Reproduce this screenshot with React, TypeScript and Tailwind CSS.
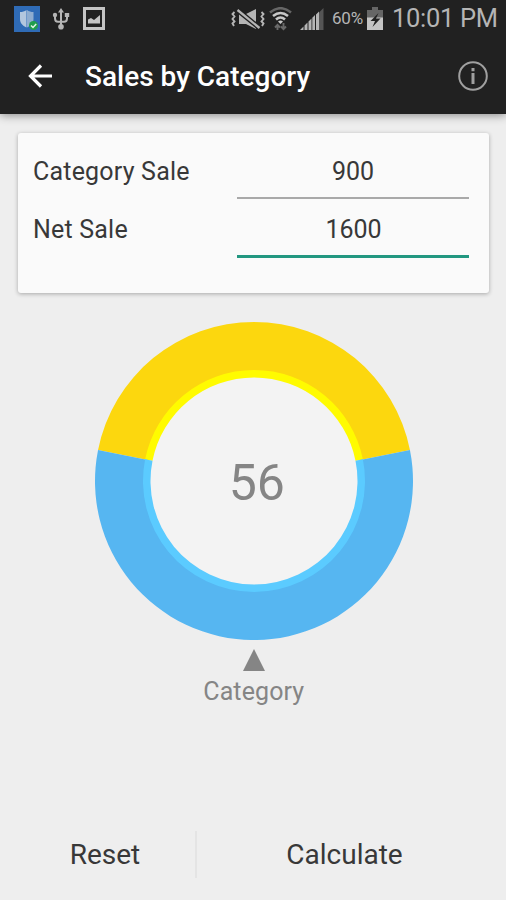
import { useState } from "react";

type Arc = {
  d: string;
  color: string;
};

const CENTER = 159;

// closed ring segment between two radii, angles in degrees clockwise from 3 o'clock
const ringSegment = (inner: number, outer: number, from: number, to: number) => {
  const point = (r: number, deg: number) => {
    const rad = (deg * Math.PI) / 180;
    return `${(CENTER + r * Math.cos(rad)).toFixed(2)} ${(CENTER + r * Math.sin(rad)).toFixed(2)}`;
  };
  const large = to - from > 180 ? 1 : 0;
  return `M${point(outer, from)} A${outer} ${outer} 0 ${large} 1 ${point(outer, to)} L${point(inner, to)} A${inner} ${inner} 0 ${large} 0 ${point(inner, from)}Z`;
};

const StatusBar = () => {
  return (
    <div className="flex h-[37px] items-center text-[#b5b5b5]">
      <svg className="ml-[14px] h-[26px] w-[26px]" viewBox="0 0 26 26">
        <rect width="26" height="26" fill="#2f6bb6" />
        <path d="M13 4c2 1.500 4 2 6.500 2v7c0 4-2.500 6.500-6.500 8.500z" fill="#8fadd0" />
        <path d="M12.500 4v17.500C8.500 19.500 6 17 6 13V6c2.500 0 4.500-.5 6.500-2z" fill="#b3c7de" />
        <circle cx="19.500" cy="19.500" r="4.500" fill="#1f9d4c" />
        <path d="M17 19.500l2 2 3.200-3.600" fill="none" stroke="#e0f3e6" strokeWidth="1.500" />
      </svg>
      <svg className="ml-[12px] h-[22px] w-[18px]" viewBox="0 0 18 22" fill="none" stroke="currentColor" strokeWidth="2">
        <path d="M9 3v16M3 7.500v2.800c0 2 1.200 3.500 3 3.500h6c1.800 0 3-1.500 3-3.500V7.500" />
        <path d="M9 0l3 4.500H6z" fill="currentColor" stroke="none" />
        <circle cx="3" cy="7" r="2.200" fill="currentColor" stroke="none" />
        <path d="M12.800 5h4.400v4h-4.400z" fill="currentColor" stroke="none" />
        <circle cx="9" cy="18.800" r="2.800" fill="currentColor" stroke="none" />
      </svg>
      <svg className="ml-[13px] h-[23px] w-[22px]" viewBox="0 0 22 23">
        <path d="M1.500 1.500h19v20h-19z" fill="none" stroke="#c4c4c4" strokeWidth="3" />
        <path d="M5 16.500v-4l3-1.500 3 2 6-5v8.500z" fill="#c4c4c4" />
      </svg>

      <svg className="ml-[126px] h-[22px] w-[34px]" viewBox="0 0 34 22" fill="none" stroke="currentColor" strokeWidth="1.900">
        <path d="M3.500 4l-2 2 2 2.500-2 2.500 2 2.500-2 2 1.500 2.500M30.500 4l2 2-2 2.500 2 2.500-2 2.500 2 2-1.500 2.500" />
        <path d="M8 6h7l10-5v20l-10-5H8z" fill="currentColor" stroke="none" />
        <path d="M6.500 2l22 18" stroke="#212121" strokeWidth="5" />
        <path d="M6.500 2l22 18" strokeWidth="2.300" />
      </svg>
      <svg className="ml-[4px] mt-[1px] h-[24px] w-[23px]" viewBox="0 0 23 24" fill="none" stroke="currentColor">
        <path d="M1 5.500Q11.500-3 22 5.500" stroke="#666" strokeWidth="2.600" />
        <path d="M4 9Q11.500 3 19 9M7 12.500Q11.500 8.500 16 12.500" stroke="#c8c8c8" strokeWidth="2.600" />
        <path d="M9 14.500q2.500-2 5 0L11.500 17z" fill="#c8c8c8" stroke="none" />
        <path d="M8.500 23v-5.500m-2.500 3l2.500-2.700 2.500 2.700M14.500 16v6m-2.500-2.500l2.500 2.700 2.500-2.700" stroke="#696969" strokeWidth="1.900" />
      </svg>
      <svg className="ml-[8px] mt-[1px] h-[23px] w-[24px]" viewBox="0 0 24 23">
        <path d="M19 4.500L23.500 0v22H19z" fill="#555" />
        <path d="M0 22l3.500-3.500V22zM4.500 17.500l3-3V22h-3zM8.500 13.500l3-3V22h-3zM12.300 9.700l2.700-2.700v15h-2.700zM16 6.500l3-3V22h-3z" fill="currentColor" />
      </svg>
      <span className="ml-[8px] w-[32px] whitespace-nowrap text-[17px] tracking-[-0.2px]">60%</span>
      <svg className="ml-[3px] h-[23px] w-[16px]" viewBox="0 0 16 23">
        <path d="M5 0h6v3h5v8H0V3h5z" fill="#666" />
        <path d="M0 10.500h16V23H0z" fill="#c4c4c4" />
        <path d="M11.500 6L3.500 14H8l-2.500 6 8-8.500H9z" fill="#212121" />
      </svg>
      <span className="ml-[9px] whitespace-nowrap text-[25.500px] tracking-[-0.3px]">10:01 PM</span>
    </div>
  );
};

const CategoryChart = ({ percent }: { percent: number }) => {
  const half = (percent / 100) * 180;
  const from = 90 - half;
  const to = 90 + half;
  const arcs: Arc[] = [
    { d: ringSegment(107, 159, to, from + 360), color: "#fcd70e" },
    { d: ringSegment(103.5, 111, to, from + 360), color: "#fffb00" },
    { d: ringSegment(107, 159, from, to), color: "#56b6f1" },
    { d: ringSegment(103.5, 111, from, to), color: "#5bcbff" },
  ];

  return (
    <div className="mt-[28.5px] flex flex-col items-center pl-[1.5px] text-[#858585]">
      <div className="grid h-[318px] w-[318px] place-items-center">
        <svg className="col-start-1 row-start-1 h-[318px] w-[318px]" viewBox="0 0 318 318">
          <circle cx={CENTER} cy={CENTER} r="104" fill="#f3f3f3" />
          {arcs.map(arc => (
            <path key={arc.color} d={arc.d} fill={arc.color} />
          ))}
        </svg>
        <span className="z-10 col-start-1 row-start-1 ml-[6px] mt-[4px] text-[50px] leading-none">
          {Math.floor(percent)}
        </span>
      </div>
      <svg className="mt-[9px] h-[22px] w-[22px]" viewBox="0 0 22 22">
        <path d="M11 0l11 22H0z" fill="#858585" />
      </svg>
      <p className="mt-[5.500px] text-[25px] leading-[32px] tracking-[0.1px]">Category</p>
    </div>
  );
};

const App = () => {
  const [categorySale, setCategorySale] = useState("900");
  const [netSale, setNetSale] = useState("1600");
  const [percent, setPercent] = useState(56.25);

  const handleCalculate = () => {
    const result = (Number(categorySale) / Number(netSale)) * 100;
    if (result > 0 && result < 100) {
      setPercent(result);
    }
  };

  const handleReset = () => {
    setCategorySale("");
    setNetSale("");
  };

  return (
    <div className="flex h-[900px] w-[506px] flex-col overflow-hidden bg-[#eeeeee] font-['Roboto',sans-serif] text-[#383838]">
      <header className="h-[114px] shrink-0 bg-[#212121] shadow-[0_1px_9px_rgba(0,0,0,0.45)]">
        <StatusBar />
        <div className="flex h-[77px] items-center">
          <svg className="ml-[28px] h-[24px] w-[24px]" viewBox="0 0 24 24" fill="none" stroke="#fff" strokeWidth="3.200">
            <path d="M24 12H3M13 1.500L2.500 12 13 22.500" />
          </svg>
          <h1 className="ml-[33px] mt-[3px] text-[28px] font-medium text-white">Sales by Category</h1>
          <svg className="ml-auto mr-[18px] h-[30px] w-[30px]" viewBox="0 0 30 30" fill="none" stroke="#a0a0a0">
            <circle cx="15" cy="15" r="13.800" strokeWidth="2" />
            <path d="M15 12v11M15 7v3.200" strokeWidth="3" />
          </svg>
        </div>
      </header>

      <div className="ml-[18px] mr-[17px] mt-[19px] h-[160px] shrink-0 rounded-[3px] bg-[#fafafa] px-[15px] shadow-[0_1px_4px_rgba(0,0,0,0.3)]">
        <div className="flex h-[66px]">
          <label htmlFor="category-sale" className="w-[204px] pt-[23px] text-[25px] leading-[32px] tracking-[0.2px]">Category Sale</label>
          <input
            id="category-sale"
            className="h-[66px] w-[232px] border-b-2 border-[#a9a9a9] pt-[13px] text-center text-[25px] outline-none"
            value={categorySale}
            onChange={e => setCategorySale(e.target.value)}
          />
        </div>
        <div className="flex h-[59px]">
          <label htmlFor="net-sale" className="w-[204px] pt-[15px] text-[25px] leading-[32px] tracking-[0.2px]">Net Sale</label>
          <input
            id="net-sale"
            className="h-[59px] w-[232px] border-b-[3px] border-[#229780] pl-[1px] pt-[4px] text-center text-[25px] outline-none"
            value={netSale}
            onChange={e => setNetSale(e.target.value)}
          />
        </div>
      </div>

      <CategoryChart percent={percent} />

      <div className="mb-[22px] mt-auto flex h-[47px] items-center text-[28px]">
        <button onClick={handleReset} className="h-full w-[195px] pl-[15px]">Reset</button>
        <div className="h-full w-[2px] bg-[#e4e4e4]" />
        <button onClick={handleCalculate} className="h-full flex-1 pr-[14px]">Calculate</button>
      </div>
    </div>
  );
};

export default App;
